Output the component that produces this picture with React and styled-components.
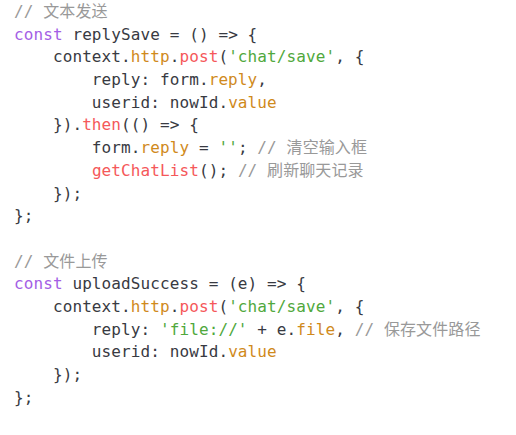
import React from "react";
import styled, {createGlobalStyle} from "styled-components";

const GlobalStyle = createGlobalStyle`
    html, body {
        margin: 0;
        padding: 0;
        background: #ffffff;
    }
`;

const lines = [
    [["c", "// 文本发送"]],
    [["k", "const"], ["t", " replySave = () => {"]],
    [["t", "    context."], ["p", "http"], ["t", "."], ["f", "post"], ["t", "("], ["s", "'chat/save'"], ["t", ", {"]],
    [["t", "        reply: form."], ["p", "reply"], ["t", ","]],
    [["t", "        userid: nowId."], ["p", "value"]],
    [["t", "    })."], ["f", "then"], ["t", "(() => {"]],
    [["t", "        form."], ["p", "reply"], ["t", " = "], ["s", "''"], ["t", "; "], ["c", "// 清空输入框"]],
    [["t", "        "], ["f", "getChatList"], ["t", "(); "], ["c", "// 刷新聊天记录"]],
    [["t", "    });"]],
    [["t", "};"]],
    [],
    [["c", "// 文件上传"]],
    [["k", "const"], ["t", " uploadSuccess = (e) => {"]],
    [["t", "    context."], ["p", "http"], ["t", "."], ["f", "post"], ["t", "("], ["s", "'chat/save'"], ["t", ", {"]],
    [["t", "        reply: "], ["s", "'file://'"], ["t", " + e."], ["p", "file"], ["t", ", "], ["c", "// 保存文件路径"]],
    [["t", "        userid: nowId."], ["p", "value"]],
    [["t", "    });"]],
    [["t", "};"]],
];

const colors = {
    t: "#383a42",
    c: "#999999",
    k: "#a45ee5",
    p: "#d08a1c",
    f: "#f5585a",
    s: "#50a83c",
};

const App = () => {
    return (
        <>
            <GlobalStyle/>
            <CodeBlock>
                {lines.map((tokens, i) => (
                    <Line key={i}>
                        {tokens.map(([kind, text], j) => (
                            <Token key={j} $kind={kind}>{text}</Token>
                        ))}
                    </Line>
                ))}
            </CodeBlock>
        </>
    );
};

export default App;

// Стили
const CodeBlock = styled.div`
    width: 516px;
    height: 435px;
    box-sizing: border-box;
    padding: 1px 0 0 14px;
    background: #ffffff;
    font-family: "DejaVu Sans Mono", "Noto Sans CJK SC", monospace;
    font-size: 16px;
    letter-spacing: 0.1px;
    display: flex;
    flex-direction: column;
`;

const Line = styled.div`
    height: 22.7px;
    line-height: 22.7px;
    white-space: pre;
`;

const Token = styled.span`
    color: ${(p) => colors[p.$kind]};
`;
